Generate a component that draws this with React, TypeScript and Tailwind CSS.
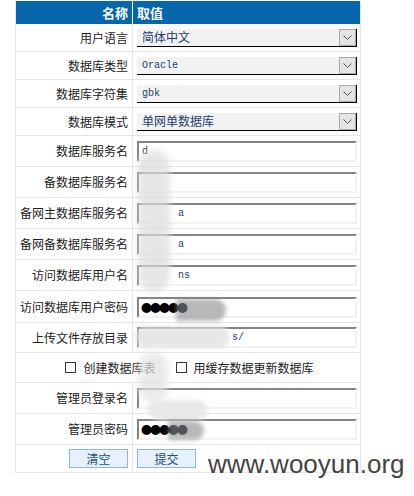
import React from "react";

const CJK = "font-['Microsoft_YaHei','Noto_Sans_CJK_SC',sans-serif]";
const MONO = "font-['Liberation_Mono','Courier_New',monospace]";

type SelectProps = { value: string; mono?: boolean };

const FakeSelect = ({ value, mono }: SelectProps) => (
  <div className="flex h-[18px] w-[220px] items-center border-r border-b border-black bg-[#f2f2f2]">
    <span
      className={`flex-1 pl-[5px] ${
        mono ? `${MONO} text-[10px]` : "text-[12px]"
      } text-[#1c3d6e]`}
    >
      {value}
    </span>
    <div className="flex h-[17px] w-[17px] items-center justify-center border border-[#a9a9a9] bg-[#e4e4e4]">
      <svg width="9" height="5" viewBox="0 0 9 5">
        <path d="M0.5 0.5 L4.5 4.5 L8.5 0.5" fill="none" stroke="#555" strokeWidth="1" />
      </svg>
    </div>
  </div>
);

const FakeInput = ({ value, pw }: { value?: string; pw?: boolean }) => (
  <div className="flex h-[21px] w-[220px] items-center border-t-2 border-l-2 border-r-2 border-b-2 border-t-[#848484] border-l-[#848484] border-r-[#f2f2f2] border-b-[#f2f2f2] bg-white">
    {pw ? (
      <span className="pl-[2px] text-[11px] leading-none tracking-[-2px] text-black">
        ●●●●●
      </span>
    ) : (
      <span className={`whitespace-pre pl-[3px] ${MONO} text-[10px] text-[#1c3d6e]`}>
        {value}
      </span>
    )}
  </div>
);

const Row = ({
  label,
  tall,
  children,
}: {
  label: string;
  tall?: boolean;
  children: React.ReactNode;
}) => (
  <div className={`flex border-b border-[#e6e6e6] ${tall ? "h-[31px]" : "h-[28px]"}`}>
    <div className="flex w-[117px] items-center justify-end border-r border-[#e6e6e6] pr-[4px] text-[12px] text-[#222]">
      {label}
    </div>
    <div className="flex flex-1 items-center pl-[4px]">{children}</div>
  </div>
);

const Check = ({ label }: { label: string }) => (
  <label className="flex items-center gap-[7px] text-[12px] text-[#222]">
    <span className="h-[11px] w-[11px] border border-[#333] bg-white" />
    {label}
  </label>
);

export default function App() {
  return (
    <div className={`relative h-[496px] w-[414px] overflow-hidden bg-white ${CJK}`}>
      <div className="ml-[15px] mt-[1px] w-[346px] border-l border-r border-[#e6e6e6]">
        {/* cabecera */}
        <div className="flex h-[23px] bg-[#0766aa] text-[13px] font-bold text-white">
          <div className="flex w-[117px] items-center justify-end border-r border-white pr-[4px]">
            名称
          </div>
          <div className="flex items-center pl-[4px]">取值</div>
        </div>

        <Row label="用户语言">
          <FakeSelect value="简体中文" />
        </Row>
        <Row label="数据库类型">
          <FakeSelect value="Oracle" mono />
        </Row>
        <Row label="数据库字符集">
          <FakeSelect value="gbk" mono />
        </Row>
        <Row label="数据库模式">
          <FakeSelect value="单网单数据库" />
        </Row>

        <Row label="数据库服务名" tall>
          <FakeInput value="d" />
        </Row>
        <Row label="备数据库服务名" tall>
          <FakeInput value="" />
        </Row>
        <Row label="备网主数据库服务名" tall>
          <FakeInput value="      a" />
        </Row>
        <Row label="备网备数据库服务名" tall>
          <FakeInput value="      a" />
        </Row>
        <Row label="访问数据库用户名" tall>
          <FakeInput value="      ns" />
        </Row>
        <div className="h-[1px]" />
        <Row label="访问数据库用户密码" tall>
          <FakeInput pw />
        </Row>
        <div className="flex h-[30px] border-b border-[#e6e6e6]">
          <div className="flex w-[117px] items-center justify-end border-r border-[#e6e6e6] pr-[4px] text-[12px] text-[#222]">
            上传文件存放目录
          </div>
          <div className="flex flex-1 items-center pl-[4px]">
            <FakeInput value="               s/" />
          </div>
        </div>

        {/* opciones */}
        <div className="flex h-[30px] items-center justify-center gap-[20px] border-b border-[#e6e6e6] pl-[3px]">
          <Check label="创建数据库表" />
          <Check label="用缓存数据更新数据库" />
        </div>

        <Row label="管理员登录名" tall>
          <FakeInput value="" />
        </Row>
        <Row label="管理员密码" tall>
          <FakeInput pw />
        </Row>

        <div className="flex h-[28px] border-b border-[#e6e6e6]">
          <div className="flex w-[117px] items-center justify-end border-r border-[#e6e6e6] pr-[4px]">
            <button className="h-[19px] w-[59px] border border-[#8cb6de] bg-[#e6f1fb] text-[12px] leading-none text-[#1b4f8c]">
              清空
            </button>
          </div>
          <div className="flex items-center pl-[4px]">
            <button className="h-[19px] w-[59px] border border-[#8cb6de] bg-[#e6f1fb] text-[12px] leading-none text-[#1b4f8c]">
              提交
            </button>
          </div>
        </div>
      </div>

      {/* manchas de ocultación */}
      <div className="pointer-events-none absolute left-[138px] top-[150px] h-[142px] w-[32px] rounded-full bg-[#dcdcdc] opacity-70 blur-[3px]" />
      <div className="pointer-events-none absolute left-[176px] top-[299px] h-[22px] w-[50px] rounded-r-full bg-[#8a8a8a] opacity-60 blur-[2px]" />
      <div className="pointer-events-none absolute left-[135px] top-[326px] h-[22px] w-[95px] rounded-full bg-[#e2e2e2] opacity-80 blur-[2px]" />
      <div className="pointer-events-none absolute left-[138px] top-[352px] h-[50px] w-[30px] rounded-full bg-[#e2e2e2] opacity-70 blur-[3px]" />
      <div className="pointer-events-none absolute left-[148px] top-[400px] h-[20px] w-[60px] rounded-full bg-[#e6e6e6] opacity-90 blur-[2px]" />
      <div className="pointer-events-none absolute left-[168px] top-[421px] h-[19px] w-[36px] rounded-r-full bg-[#8c8c8c] opacity-60 blur-[2px]" />

      {/* marca de agua */}
      <div className="pointer-events-none absolute left-[208px] top-[451px] font-['Liberation_Sans',Arial,sans-serif] text-[26px] leading-none text-[#444]">
        www.wooyun.org
      </div>
    </div>
  );
}
